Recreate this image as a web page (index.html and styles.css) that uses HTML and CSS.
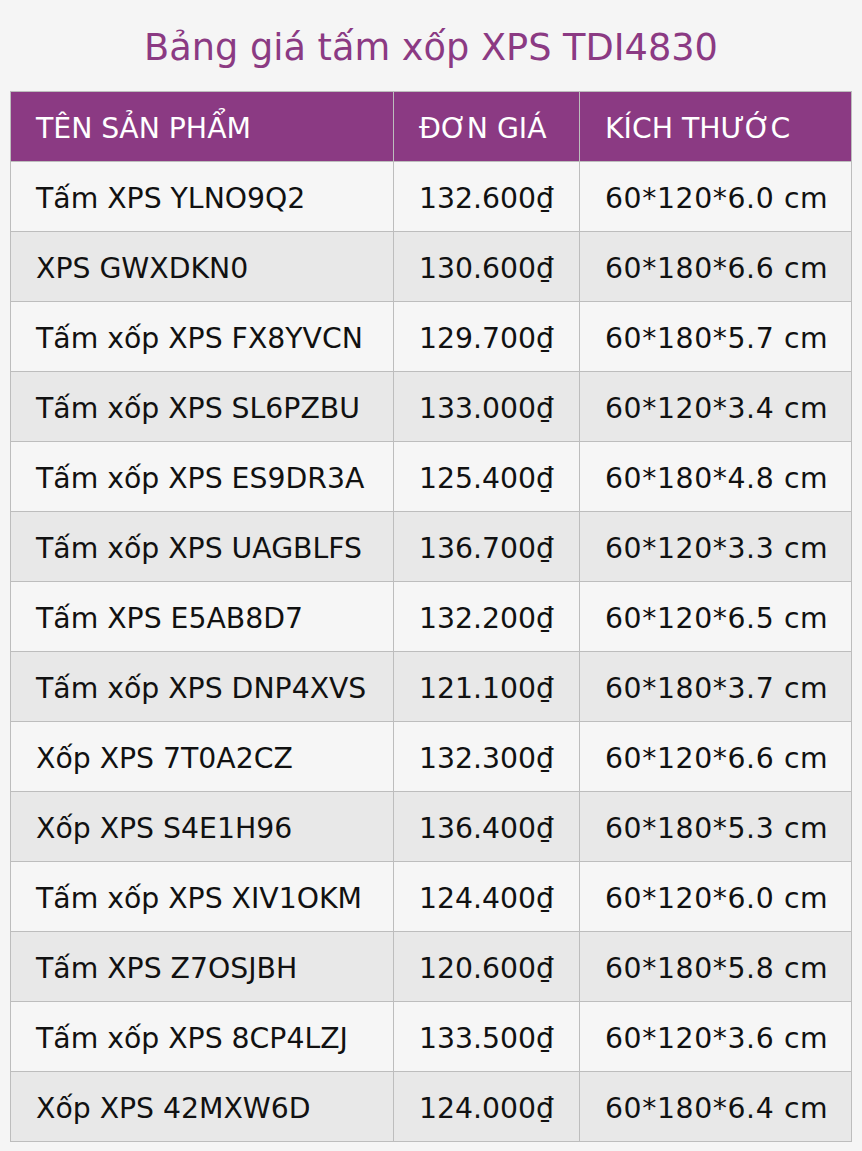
FILE: index.html
```html
<!DOCTYPE html>
<html lang="vi">
<head>
<meta charset="utf-8">
<title>Bảng giá tấm xốp XPS TDI4830</title>
<link rel="stylesheet" href="styles.css">
</head>
<body>
<h1 class="title">Bảng giá tấm xốp XPS TDI4830</h1>
<table class="price-table">
  <colgroup>
    <col class="c-name">
    <col class="c-price">
    <col class="c-size">
  </colgroup>
  <thead>
    <tr><th>TÊN SẢN PHẨM</th><th>ĐƠN GIÁ</th><th>KÍCH THƯỚC</th></tr>
  </thead>
  <tbody>
    <tr><td>Tấm XPS YLNO9Q2</td><td>132.600₫</td><td class="size">60*120*6.0 cm</td></tr>
    <tr><td>XPS GWXDKN0</td><td>130.600₫</td><td class="size">60*180*6.6 cm</td></tr>
    <tr><td>Tấm xốp XPS FX8YVCN</td><td>129.700₫</td><td class="size">60*180*5.7 cm</td></tr>
    <tr><td>Tấm xốp XPS SL6PZBU</td><td>133.000₫</td><td class="size">60*120*3.4 cm</td></tr>
    <tr><td>Tấm xốp XPS ES9DR3A</td><td>125.400₫</td><td class="size">60*180*4.8 cm</td></tr>
    <tr><td>Tấm xốp XPS UAGBLFS</td><td>136.700₫</td><td class="size">60*120*3.3 cm</td></tr>
    <tr><td>Tấm XPS E5AB8D7</td><td>132.200₫</td><td class="size">60*120*6.5 cm</td></tr>
    <tr><td>Tấm xốp XPS DNP4XVS</td><td>121.100₫</td><td class="size">60*180*3.7 cm</td></tr>
    <tr><td>Xốp XPS 7T0A2CZ</td><td>132.300₫</td><td class="size">60*120*6.6 cm</td></tr>
    <tr><td>Xốp XPS S4E1H96</td><td>136.400₫</td><td class="size">60*180*5.3 cm</td></tr>
    <tr><td>Tấm xốp XPS XIV1OKM</td><td>124.400₫</td><td class="size">60*120*6.0 cm</td></tr>
    <tr><td>Tấm XPS Z7OSJBH</td><td>120.600₫</td><td class="size">60*180*5.8 cm</td></tr>
    <tr><td>Tấm xốp XPS 8CP4LZJ</td><td>133.500₫</td><td class="size">60*120*3.6 cm</td></tr>
    <tr><td>Xốp XPS 42MXW6D</td><td>124.000₫</td><td class="size">60*180*6.4 cm</td></tr>
  </tbody>
</table>
</body>
</html>
```

FILE: styles.css
```css
html, body {
  margin: 0;
  padding: 0;
  background: #f5f5f5;
}
body {
  padding: 21px 10px 0;
  font-family: "DejaVu Sans", Verdana, sans-serif;
  color: #111;
}
.title {
  margin: 0 0 16px;
  font-size: 36.7px;
  line-height: 54px;
  font-weight: normal;
  text-align: center;
  color: #8b3a83;
}
.price-table {
  width: 841px;
  border-collapse: collapse;
  table-layout: fixed;
  font-size: 28.3px;
}
.c-name { width: 383px; }
.c-price { width: 186px; }
.c-size { width: 272px; }
.price-table th,
.price-table td {
  height: 70px;
  padding: 3px 0 0 25px;
  border: 1px solid #bdbdbd;
  text-align: left;
  vertical-align: middle;
  white-space: nowrap;
  box-sizing: border-box;
}
.price-table td.size { letter-spacing: 0.6px; }
.price-table th {
  background: #8b3a83;
  color: #fff;
  font-weight: normal;
}
.price-table tbody tr:nth-child(odd) td { background: #f6f6f6; }
.price-table tbody tr:nth-child(even) td { background: #e8e8e8; }
```
